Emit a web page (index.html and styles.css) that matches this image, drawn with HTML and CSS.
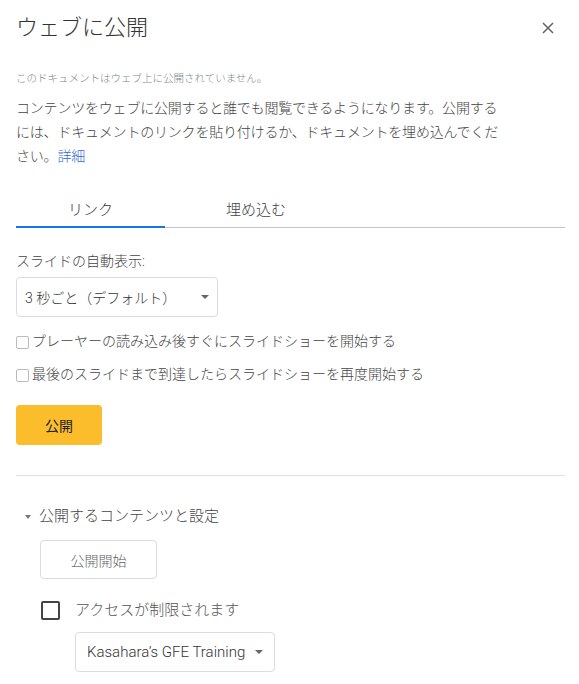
FILE: index.html
```html
<!DOCTYPE html>
<html lang="ja">
<head>
    <meta charset="UTF-8">
    <meta name="viewport" content="width=device-width, initial-scale=1.0">
    <title>ウェブに公開</title>
    <link rel="stylesheet" href="styles.css">
</head>
<body>
    <div class="dialog">
        <!-- Header -->
        <div class="header">
            <h1 class="title">ウェブに公開</h1>
            <button class="close-button" aria-label="閉じる">
                <svg width="12" height="12" viewBox="0 0 12 12">
                    <path d="M1 1L11 11M11 1L1 11" stroke="#5f6368" stroke-width="1.5" fill="none"/>
                </svg>
            </button>
        </div>

        <p class="status">このドキュメントはウェブ上に公開されていません。</p>
        <p class="description">コンテンツをウェブに公開すると誰でも閲覧できるようになります。公開する<br>には、ドキュメントのリンクを貼り付けるか、ドキュメントを埋め込んでくだ<br>さい。<a href="#" class="link">詳細</a></p>

        <!-- Tabs -->
        <div class="tabs">
            <div class="tab active">リンク</div>
            <div class="tab">埋め込む</div>
        </div>

        <div class="field-label">スライドの自動表示:</div>
        <div class="select select-interval">
            <span>3 秒ごと（デフォルト）</span>
            <span class="arrow"></span>
        </div>

        <label class="check-row">
            <span class="small-box"></span>
            <span>プレーヤーの読み込み後すぐにスライドショーを開始する</span>
        </label>
        <label class="check-row second">
            <span class="small-box"></span>
            <span>最後のスライドまで到達したらスライドショーを再度開始する</span>
        </label>

        <button class="publish-button">公開</button>

        <div class="divider"></div>

        <!-- Published content and settings -->
        <div class="section-toggle">
            <span class="toggle-arrow"></span>
            <span>公開するコンテンツと設定</span>
        </div>

        <div class="section-body">
            <button class="start-button">公開開始</button>

            <label class="access-row">
                <span class="big-box"></span>
                <span>アクセスが制限されます</span>
            </label>

            <div class="select select-domain">
                <span>Kasahara’s GFE Training</span>
                <span class="arrow"></span>
            </div>
        </div>
    </div>
</body>
</html>
```

FILE: styles.css
```css
* {
    margin: 0;
    padding: 0;
    box-sizing: border-box;
    font-family: Roboto, 'Noto Sans CJK JP', sans-serif;
    font-weight: 300;
}

body {
    background-color: white;
    width: 579px;
    height: 684px;
    overflow: hidden;
}

.dialog {
    padding: 0 14px 0 16px;
}

.header {
    display: flex;
    justify-content: space-between;
    align-items: center;
    padding-top: 14px;
}

.title {
    font-size: 22px;
    line-height: 28px;
    color: #333;
}

.close-button {
    background: none;
    border: none;
    width: 14px;
    height: 14px;
    margin-right: 10px;
    display: flex;
    align-items: center;
    justify-content: center;
    cursor: pointer;
}

.status {
    margin-top: 29px;
    font-size: 10.5px;
    line-height: 16px;
    color: #80868b;
}

.description {
    margin-top: 9px;
    font-size: 14px;
    line-height: 24px;
    letter-spacing: -0.2px;
    color: #444;
}

.link {
    color: #3367d6;
    text-decoration: none;
}

.tabs {
    display: flex;
    margin-top: 32px;
    border-bottom: 1px solid #c4c4c4;
}

.tab {
    width: 149px;
    text-align: center;
    font-size: 15px;
    line-height: 20px;
    padding-bottom: 6px;
    color: #444;
    margin-bottom: -1px;
    border-bottom: 2px solid transparent;
}

.tab + .tab {
    width: 182px;
}

.tab.active {
    border-bottom-color: #1a73e8;
    color: #333;
}

.field-label {
    margin-top: 23px;
    font-size: 14px;
    line-height: 20px;
    color: #444;
}

.select {
    display: flex;
    align-items: center;
    justify-content: space-between;
    height: 40px;
    border: 1px solid #dadce0;
    border-radius: 4px;
    color: #333;
}

.select-interval {
    margin-top: 6px;
    width: 202px;
    padding: 0 8px 0 8px;
    font-size: 14px;
}

.arrow {
    width: 0;
    height: 0;
    border-left: 4px solid transparent;
    border-right: 4px solid transparent;
    border-top: 4px solid #666;
}

.check-row {
    display: flex;
    align-items: center;
    margin-top: 14px;
    font-size: 14px;
    line-height: 20px;
    color: #444;
}

.check-row.second {
    margin-top: 13px;
}

.small-box {
    width: 13px;
    height: 13px;
    border: 1px solid #bbb;
    border-radius: 2px;
    margin-right: 3px;
    margin-top: 2px;
}

.publish-button {
    display: block;
    margin-top: 21px;
    width: 86px;
    height: 40px;
    background-color: #fbbd2c;
    border: none;
    border-radius: 4px;
    font-size: 14px;
    font-weight: 400;
    color: #222;
    cursor: pointer;
}

.divider {
    margin-top: 30px;
    height: 1px;
    background-color: #e0e0e0;
}

.section-toggle {
    display: flex;
    align-items: center;
    margin-top: 30px;
    font-size: 15px;
    line-height: 20px;
    color: #444;
}

.toggle-arrow {
    width: 0;
    height: 0;
    margin: 1px 8px 0 9px;
    border-left: 3.5px solid transparent;
    border-right: 3.5px solid transparent;
    border-top: 4px solid #777;
}

.section-body {
    padding-left: 24px;
}

.start-button {
    display: block;
    margin-top: 14px;
    width: 117px;
    height: 39px;
    background: white;
    border: 1px solid #dadce0;
    border-radius: 4px;
    font-size: 14px;
    color: #5f6368;
    cursor: pointer;
}

.access-row {
    display: flex;
    align-items: center;
    margin-top: 21px;
    font-size: 15px;
    line-height: 20px;
    color: #555;
}

.big-box {
    width: 19px;
    height: 19px;
    margin-left: 1px;
    margin-right: 15px;
    border: 2px solid #444;
    border-radius: 2px;
}

.select-domain {
    margin-top: 12px;
    margin-left: 35px;
    width: 200px;
    padding: 0 11px 0 11px;
    font-size: 15px;
    font-weight: 400;
    color: #333;
}
```
